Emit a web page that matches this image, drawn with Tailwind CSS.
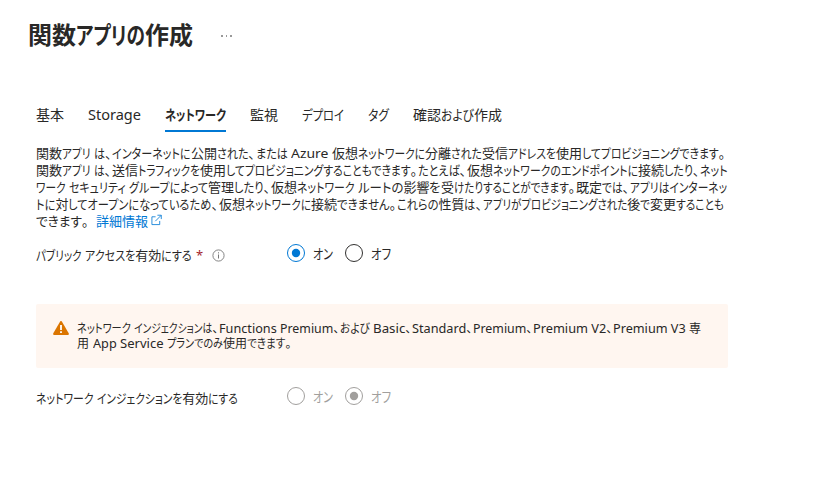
<!DOCTYPE html>
<html lang="ja">
<head>
<meta charset="utf-8">
<title>関数アプリの作成</title>
<script src="https://cdn.jsdelivr.net/npm/@tailwindcss/browser@4"></script>
</head>
<body class="bg-white text-[#292827] text-[13px] leading-[17px] font-['Noto_Sans','Noto_Sans_CJK_JP',sans-serif] w-[818px] h-[492px] overflow-hidden">
<main class="flex flex-col [&_span]:whitespace-pre">
  <header class="flex items-center h-[70px] pl-7">
    <h1 class="flex text-[24px] leading-[36px] font-bold"><span data-w="165">関数アプリの作成</span></h1>
    <div class="flex gap-[3px] ml-[28px] mt-[2px]"><i class="size-[1.5px] bg-[#999]"></i><i class="size-[1.5px] bg-[#999]"></i><i class="size-[1.5px] bg-[#999]"></i></div>
  </header>

  <nav class="flex gap-6 pl-9 mt-[31px] h-[31px] text-[14px] leading-[28px]">
    <span data-w="28">基本</span>
    <span data-w="53">Storage</span>
    <span data-w="61" class="font-bold border-b-2 border-[#0078d4]">ネットワーク</span>
    <span data-w="28">監視</span>
    <span data-w="42">デプロイ</span>
    <span data-w="21">タグ</span>
    <span data-w="89">確認および作成</span>
  </nav>

  <section class="pl-9 mt-[13px] h-[85px]">
    <div class="flex"><span data-w="58">関数アプリ </span><span data-w="197">は、インターネットに公開された、または </span><span data-w="41">Azure </span><span data-w="93">仮想ネットワークに</span><span data-w="301">分離された受信アドレスを使用してプロビジョニングできます。</span></div>
    <div class="flex"><span data-w="58">関数アプリ </span><span data-w="106">は、送信トラフィックを</span><span data-w="218">使用してプロビジョニングすることもできます。</span><span data-w="49">たとえば、</span><span data-w="171">仮想ネットワークのエンドポイントに</span><span data-w="90">接続したり、ネット</span></div>
    <div class="flex"><span data-w="33">ワーク </span><span data-w="60">セキュリティ </span><span data-w="79">グループによって</span><span data-w="63">管理したり、</span><span data-w="87">仮想ネットワーク </span><span data-w="96">ルートの影響を受</span><span data-w="122">けたりすることができます。</span><span data-w="151">既定では、アプリはインターネッ</span></div>
    <div class="flex"><span data-w="183">トに対してオープンになっているため、</span><span data-w="92">仮想ネットワークに</span><span data-w="86">接続できません。</span><span data-w="86">これらの性質は、</span><span data-w="167">アプリがプロビジョニングされた後で</span><span data-w="74">変更することも</span></div>
    <div class="flex"><span data-w="60">できます。  </span><a class="flex text-[#0078d4]"><span data-w="52">詳細情報</span>
      <svg class="ml-[3px] mt-[1px]" width="11" height="12" viewBox="0 0 12 12" fill="none" stroke="#0078d4" stroke-width=".9"><path d="M5 2.5H1v8.5h8.5V7M7 .8h4.2V5M11 1L4.7 7.3"/></svg></a></div>
  </section>

  <section class="flex items-center pl-9 mt-[9px] h-[28px]">
    <div class="flex items-center w-[251px] pt-[5px]"><span data-w="49">パブリック </span><span data-w="107">アクセスを有効にする</span><span class="ml-1 text-[#a4262c]">*</span>
      <svg class="ml-[9px]" width="13" height="13" viewBox="0 0 13 13" fill="none" stroke="#777"><circle cx="6.5" cy="6.5" r="5.6" stroke-width=".9"/><path d="M6.5 5.5V9.5M6.5 3.3V4.4"/></svg></div>
    <svg width="18" height="18" viewBox="0 0 18 18"><circle cx="9" cy="9" r="8.5" fill="none" stroke="#0078d4"/><circle cx="9" cy="9" r="4.2" fill="#0078d4"/></svg>
    <span data-w="20" class="ml-2 text-[14px]">オン</span>
    <svg class="ml-3" width="18" height="18" viewBox="0 0 18 18"><circle cx="9" cy="9" r="8.5" fill="none" stroke="#323130"/></svg>
    <span data-w="20" class="ml-2 text-[14px]">オフ</span>
  </section>

  <aside class="flex ml-9 mt-[37px] w-[692px] h-[64px] rounded-[2px] bg-[#fff6f0] pt-[17px] pl-[17px]">
    <svg width="16" height="14" viewBox="0 0 16 14"><path d="M7 .7a1.2 1.2 0 0 1 2 0l6.7 11.5A1.2 1.2 0 0 1 14.7 14H1.3a1.2 1.2 0 0 1-1-1.8z" fill="#db7500"/><path d="M7.1 4h1.8v5H7.1zM7.1 10.2h1.8V12H7.1z" fill="#fff"/></svg>
    <div class="ml-2 text-[12px] leading-[15px]">
      <div class="flex"><span data-w="57">ネットワーク </span><span data-w="85">インジェクションは、</span><span data-w="61">Functions </span><span data-w="60">Premium、</span><span data-w="33">および </span><span data-w="39">Basic、</span><span data-w="61">Standard、</span><span data-w="60">Premium、</span><span data-w="80">Premium V2、</span><span data-w="76">Premium V3 </span><span data-w="12">専</span></div>
      <div class="flex"><span data-w="16">用 </span><span data-w="27">App </span><span data-w="47">Service </span><span data-w="56">プランでのみ</span><span data-w="69">使用できます。</span></div>
    </div>
  </aside>

  <section class="flex items-center pl-9 mt-[14px] h-[28px]">
    <div class="flex items-center w-[251px] pt-[5px]"><span data-w="61">ネットワーク </span><span data-w="141">インジェクションを有効にする</span></div>
    <svg width="18" height="18" viewBox="0 0 18 18"><circle cx="9" cy="9" r="8.5" fill="none" stroke="#a19f9d"/></svg>
    <span data-w="20" class="ml-2 text-[14px] text-[#a19f9d]">オン</span>
    <svg class="ml-3" width="18" height="18" viewBox="0 0 18 18"><circle cx="9" cy="9" r="8.5" fill="none" stroke="#a19f9d"/><circle cx="9" cy="9" r="4.2" fill="#a19f9d"/></svg>
    <span data-w="20" class="ml-2 text-[14px] text-[#a19f9d]">オフ</span>
  </section>
</main>
<script>
// Condense kana runs so each phrase fills its measure; kanji keep their full width
// and punctuation takes a little over half an em.
function fit(el) {
  var target = +el.dataset.w;
  var size = parseFloat(getComputedStyle(el).fontSize);
  var parts = el.textContent.match(/[、。]|[\u3003-\u30ff]+|[^\u3001-\u30ff]+/g);
  el.textContent = '';
  el.style.display = 'flex';
  el.style.flexShrink = '0';
  el.style.width = target + 'px';
  var runs = parts.map(function (t) {
    var s = document.createElement('span');
    s.textContent = t;
    s.style.flex = 'none';
    s.style.whiteSpace = 'pre';
    s.style.fontFeatureSettings = '"palt"';
    s.style.transformOrigin = '0 0';
    el.appendChild(s);
    var w = s.getBoundingClientRect().width;
    if (/[、。]/.test(t)) { w = size * 0.56; s.style.width = w + 'px'; }
    return { s: s, kana: /[\u3003-\u30ff]/.test(t), latin: /[A-Za-z]/.test(t), w: w };
  });
  var hasLatin = runs.some(function (r) { return r.latin; });
  var flexible = runs.filter(function (r) { return hasLatin ? r.latin : r.kana; });
  if (!flexible.length) return;
  var sum = flexible.reduce(function (a, r) { return a + r.w; }, 0);
  var fixed = runs.reduce(function (a, r) { return a + r.w; }, 0) - sum;
  var k = (target - fixed) / sum;
  flexible.forEach(function (r) {
    r.s.style.width = r.w * k + 'px';
    r.s.style.transform = 'scaleX(' + k + ')';
  });
}
function fitAll() { document.querySelectorAll('[data-w]').forEach(fit); }
// The stylesheet may arrive late: fit again whenever the layout changes height.
new ResizeObserver(fitAll).observe(document.querySelector('main'));
window.addEventListener('load', fitAll);
fitAll();
</script>
</body>
</html>
